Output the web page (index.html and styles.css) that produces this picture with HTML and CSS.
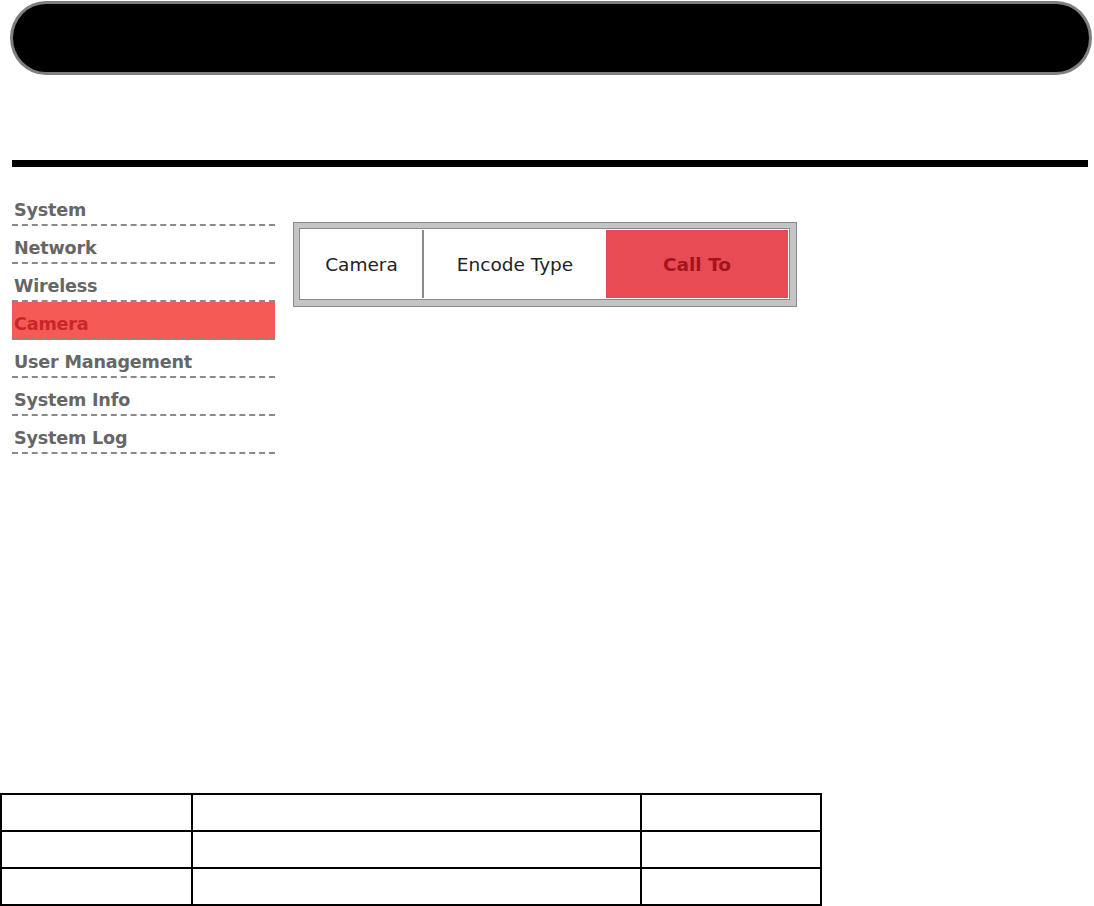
FILE: index.html
```html
<!DOCTYPE html>
<html lang="en">
<head>
    <meta charset="UTF-8">
    <title>Camera - Call To</title>
    <link rel="stylesheet" href="styles.css">
</head>
<body>
    <header class="banner"></header>

    <div class="rule"></div>

    <div class="main">
        <ul class="side-menu">
            <li><a href="#">System</a></li>
            <li><a href="#">Network</a></li>
            <li><a href="#">Wireless</a></li>
            <li class="active"><a href="#">Camera</a></li>
            <li><a href="#">User Management</a></li>
            <li><a href="#">System Info</a></li>
            <li><a href="#">System Log</a></li>
        </ul>

        <div class="tab-frame">
            <div class="tab-inner">
                <div class="tab tab-camera">Camera</div>
                <div class="tab tab-encode">Encode Type</div>
                <div class="tab tab-call selected">Call To</div>
            </div>
        </div>
    </div>

    <table class="grid">
        <tr><td class="c1"></td><td class="c2"></td><td class="c3"></td></tr>
        <tr><td class="c1"></td><td class="c2"></td><td class="c3"></td></tr>
        <tr><td class="c1"></td><td class="c2"></td><td class="c3"></td></tr>
    </table>
</body>
</html>
```

FILE: styles.css
```css
* {
    box-sizing: border-box;
    margin: 0;
    padding: 0;
}

body {
    font-family: Tahoma, 'DejaVu Sans', Verdana, sans-serif;
    background-color: #ffffff;
    color: #222222;
    width: 1094px;
    height: 906px;
    overflow: hidden;
    display: flex;
    flex-direction: column;
}

.banner {
    margin: 1px 2px 0 10px;
    height: 74px;
    background-color: #000000;
    border: 3px solid #7f7f7f;
    border-radius: 36px / 37px;
}

.rule {
    margin: 85px 6px 0 12px;
    height: 7px;
    background-color: #000000;
}

.main {
    display: flex;
    align-items: flex-start;
    margin-top: 29px;
    padding-left: 12px;
}

.side-menu {
    list-style: none;
    width: 263px;
}

.side-menu li {
    height: 38px;
    border-bottom: 2px dashed #8a8a8a;
    display: flex;
    align-items: flex-end;
    padding: 0 0 4px 2px;
}

.side-menu li:first-child {
    height: 30px;
}

.side-menu a {
    font-family: 'DejaVu Sans', Verdana, sans-serif;
    font-weight: bold;
    font-size: 17.6px;
    line-height: 1;
    color: #666666;
    text-decoration: none;
    letter-spacing: -0.2px;
}

.side-menu li.active {
    background-color: #f65a56;
}

.side-menu li.active a {
    color: #c9262a;
}

.tab-frame {
    margin: 26px 0 0 18px;
    width: 504px;
    height: 85px;
    background-color: #c4c4c4;
    border: 1px solid #8a8a8a;
    padding: 5px 6px 6px 5px;
}

.tab-inner {
    height: 100%;
    border: 1px solid #8a8a8a;
    background-color: #ffffff;
    padding: 1px;
    display: flex;
}

.tab {
    display: flex;
    align-items: center;
    justify-content: center;
    font-size: 18.5px;
    color: #222222;
    height: 100%;
}

.tab-camera {
    width: 123px;
    border-right: 2px solid #8a8a8a;
}

.tab-encode {
    width: 182px;
}

.tab-call {
    flex: 1;
}

.tab.selected {
    background-color: #e94b55;
    color: #a4141b;
    font-weight: bold;
}

.grid {
    margin-top: auto;
    width: 822px;
    border-collapse: collapse;
}

.grid td {
    height: 37px;
    border: 2px solid #000000;
}

.grid .c1 {
    width: 191px;
}

.grid .c2 {
    width: 449px;
}
```
